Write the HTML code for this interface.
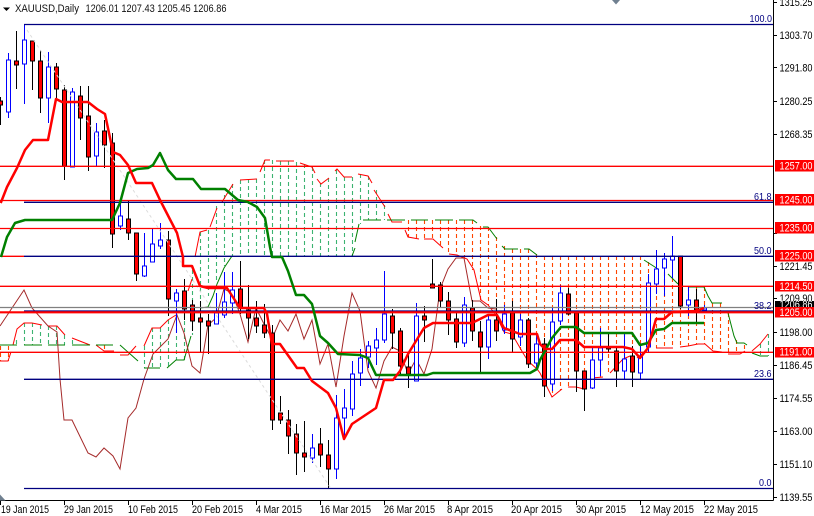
<!DOCTYPE html>
<html><head><meta charset="utf-8"><style>
html,body{margin:0;padding:0;background:#fff;width:814px;height:516px;overflow:hidden}
svg{display:block;font-family:"Liberation Sans",sans-serif}
</style></head><body>
<svg width="814" height="516" viewBox="0 0 814 516" xmlns="http://www.w3.org/2000/svg">
<rect width="814" height="516" fill="#fff"/>
<!-- cloud hatch -->
<g fill="none" stroke-width="1.1" stroke-dasharray="4 3">
<path stroke="#3cb371" d="M16.500 340V345M24.500 323V345M32.500 323V345M40.500 325V345M48.500 326V345M56.500 326V345M64.500 335V345M72.500 340V345M144.500 346V368M152.500 328V368M160.500 328V368M168.500 320V368M176.500 315V360M184.500 300V360M192.500 270V335M200.500 232V306M208.500 230V296M216.500 206V283M224.500 195V266M232.500 184V256M240.500 180V256M248.500 179V256M256.500 179V256M264.500 160V256M272.500 160V256M280.500 161V256M288.500 161V256M296.500 162V256M304.500 164V256M312.500 167V256M320.500 183V256M328.500 178V256M336.500 170V256M344.500 177V256M352.500 177V256M360.500 174V224M368.500 176V220M376.500 190V220M384.500 205V220M760.500 344V356M768.500 334V356"/>
<path stroke="#ff4500" d="M0.500 346V361M8.500 346V361M104.500 345V350M408.500 220V237M416.500 220V238M424.500 220V239M432.500 220V239M440.500 220V246M448.500 220V254M456.500 220V255M464.500 220V258M472.500 220V270M480.500 226V300M488.500 227V305M496.500 237V315M504.500 246V332M512.500 249V334M520.500 249V350M528.500 249V361M536.500 254V370M544.500 256V385M552.500 256V397M560.500 256V390M568.500 256V387M576.500 256V387M584.500 256V389M592.500 256V378M600.500 256V377M608.500 256V375M616.500 256V365M624.500 256V358M632.500 256V356M640.500 256V356M648.500 262V352M656.500 268V348M664.500 272V348M672.500 278V348M680.500 285V347M688.500 287V346M696.500 287V344M704.500 287V344M712.500 303V351M720.500 303V352M728.500 313V354M736.500 340V354M744.500 345V351"/>
</g>
<!-- span A -->
<path fill="none" stroke="#f00" stroke-width="1" d="M0 361H8L11 352M13 345L17 329L24 323H32L42 325M48 326H57L65 335M72 338L90 345M96 345L104 351H114M120 355H128L136 346M144 346L152 328H160L168 320L176 315M188 291L192 279M195 257L200 232L207 230M210 227L217 208M222 202L233 184M240 180L257 179M260 172L265 160H270M276 161H294M300 163L312 167L315 173M317 179L321 184L329 178M335 171L337 169L344 177H352M358 174L368 176L372 183M374 190L385 207M388 214L392 222H402M405 230L408 237L419 239M424 239H433L443 248M449 254L457 255L467 259L474 270L481 300L488 305L496 315L504 332L512 334L523 353L528 361L537 369L540 373L552 397L562 389M568 387H576L584 389M592 378L603 377M610 373L623 359L630 356M637 358L643 353M656 348H673M680 347L688 346L698 344H705L713 351L722 352M728 354H740L745 351M752 351L760 344L768 334"/>
<!-- span B -->
<path fill="none" stroke="#008000" stroke-width="1" d="M0 345H17M24 345H42M48 345H65M72 345H90M96 345H113M120 345L138 361M144 368H160M167 368L176 360H184L191 336M200 308L208 307L213 296L217 284L224 268L232 256M352 256L355 248M355 242L359 224M363 220H381M387 220H405M411 220H428M435 220H453M459 220H473L477 223M483 227H488L497 239M502 246L505 249H518M524 249H529L537 255M644 260L658 269M668 274L678 284M688 287H704L708 296L712 303H722M728 313L734 336L737 343H744L747 345M752 353L760 356H768"/>
<!-- chikou -->
<path fill="none" stroke="#a52a2a" stroke-width="1" d="M0 326L24 290L32 308L48 326L57 332L60 379L64 420H72L88 453L96 457L104 448L113 456L120 469L128 418L136 408L144 379L153 354L168 339L177 315L184 333L192 366L200 373L208 325L216 318L224 289L232 293L240 314L248 342L256 308L264 324L272 339L280 320L288 331L296 314L304 339L312 320L320 364L328 344L336 387L344 336L352 293L360 311L368 371L376 388L384 361L392 347L400 351L408 374L416 359L424 374L432 349L440 289L448 269L456 258H464L472 301H480L488 308L496 309"/>
<!-- candles -->
<path fill="none" stroke="#000" stroke-width="1" d="M.5 97V125M16.500 31V89M32.500 41V90M40.500 50V113M56.500 63V99M64.500 85V180M80.500 86V140M88.500 86V171M104.500 120V168M112.500 133V248M128.500 200V240M136.500 233V281M168.500 231V316M184.500 279V320M192.500 300V331M200.500 301V352M208.500 314V354M240.500 261V314M248.500 285V339M256.500 301V333M264.500 304V338M272.500 325V430M280.500 396V424M288.500 410V454M296.500 424V475M304.500 421V472M320.500 428V467M328.500 440V488M392.500 309V349M400.500 328V374M408.500 353V388M424.500 306V342M432.500 259V288M440.500 282V307M448.500 292V335M456.500 311V348M472.500 300V341M480.500 321V373M496.500 299V341M512.500 301V353M528.500 318V368M544.500 338V397M568.500 288V315M576.500 313V392M584.500 371V411M608.500 334V353M616.500 346V387M632.500 346V387M680.500 256V309M696.500 289V323"/>
<path fill="none" stroke="#0000ff" stroke-width="1" d="M8.500 53V118M24.500 25V104M48.500 52V123M72.500 88V167M96.500 123V167M120.500 200V230M144.500 233V277M152.500 229V262M160.500 223V249M176.500 289V333M216.500 293V324M224.500 272V318M232.500 272V314M312.500 434V463M336.500 395V479M344.500 389V436M352.500 361V416M360.500 349V386M368.500 341V368M376.500 328V365M384.500 271V343M416.500 303V381M464.500 297V347M488.500 314V359M504.500 305V334M520.500 314V346M536.500 333V369M552.500 308V391M560.500 285V325M592.500 348V389M600.500 328V376M624.500 334V379M640.500 344V380M648.500 274V353M656.500 250V294M664.500 253V296M672.500 236V278M688.500 287V316M704.500 305V312"/>
<path fill="#f00" stroke="#000" stroke-width="1" d="M-1.500 101h4v4h-4zM14.500 61h4v4h-4zM30.500 41h4v20h-4zM38.500 61h4v37h-4zM54.500 67h4v22h-4zM62.500 90h4v76h-4zM78.500 96h4v22h-4zM86.500 116h4v41h-4zM102.500 131h4v14h-4zM110.500 143h4v91h-4zM126.500 219h4v14h-4zM134.500 233h4v41h-4zM166.500 240h4v59h-4zM182.500 291h4v18h-4zM190.500 305h4v16h-4zM198.500 318h4v4h-4zM206.500 321h4v5h-4zM238.500 289h4v19h-4zM246.500 310h4v8h-4zM254.500 318h4v8h-4zM262.500 325h4v8h-4zM270.500 333h4v87h-4zM278.500 413h4v7h-4zM286.500 420h4v16h-4zM294.500 434h4v19h-4zM302.500 453h4v4h-4zM318.500 444h4v11h-4zM326.500 455h4v14h-4zM390.500 316h4v17h-4zM398.500 331h4v35h-4zM406.500 367h4v7h-4zM422.500 316h4v4h-4zM430.500 284h4v4h-4zM438.500 285h4v16h-4zM446.500 301h4v19h-4zM454.500 319h4v23h-4zM470.500 308h4v23h-4zM478.500 332h4v15h-4zM494.500 320h4v11h-4zM510.500 313h4v26h-4zM526.500 320h4v44h-4zM542.500 344h4v42h-4zM566.500 294h4v20h-4zM574.500 313h4v58h-4zM582.500 371h4v18h-4zM606.500 347h4v2h-4zM614.500 351h4v20h-4zM630.500 356h4v16h-4zM678.500 256h4v50h-4zM694.500 300h4v10h-4z"/>
<path fill="#fff" stroke="#0000ff" stroke-width="1" d="M6.500 60h4v52h-4zM22.500 40h4v24h-4zM46.500 67h4v31h-4zM70.500 92h4v75h-4zM94.500 132h4v24h-4zM118.500 216h4v10h-4zM142.500 266h4v10h-4zM150.500 244h4v18h-4zM158.500 240h4v6h-4zM174.500 293h4v8h-4zM214.500 313h4v11h-4zM222.500 302h4v13h-4zM230.500 290h4v13h-4zM310.500 448h4v10h-4zM334.500 418h4v51h-4zM342.500 408h4v10h-4zM350.500 374h4v35h-4zM358.500 358h4v15h-4zM366.500 346h4v11h-4zM374.500 340h4v8h-4zM382.500 314h4v26h-4zM414.500 316h4v65h-4zM462.500 305h4v38h-4zM486.500 320h4v27h-4zM502.500 314h4v16h-4zM518.500 320h4v17h-4zM534.500 344h4v19h-4zM550.500 322h4v62h-4zM558.500 293h4v28h-4zM590.500 360h4v28h-4zM598.500 348h4v12h-4zM622.500 359h4v12h-4zM638.500 357h4v16h-4zM646.500 283h4v64h-4zM654.500 269h4v15h-4zM662.500 259h4v9h-4zM670.500 256h4v4h-4zM686.500 300h4v5h-4zM702.500 308h4v2h-4z"/>
<!-- diagonal fib trend -->
<path fill="none" stroke="#dcdcdc" stroke-width="1" stroke-dasharray="3 3" d="M27 30L330 487"/>
<!-- horizontal lines -->
<g fill="none" stroke-width="1.300">
<path stroke="#808080" d="M0 307.500H773"/>
<path stroke="#f00" d="M0 166.300H773M0 200.500H773M0 228.500H773M0 256.300H24M0 286.300H773M0 352.300H773"/>
<path stroke="#000080" d="M24 24.500H773M24 202.300H773M24 256.300H773M24 311H773M24 379.300H773M24 488.500H773"/>
<path stroke="#f00" stroke-width="2.200" d="M0 312.300H773"/>
</g>
<!-- tenkan / kijun -->
<path fill="none" stroke="#008000" stroke-width="2.500" stroke-linejoin="round" d="M1 257L7 237L15 223L25 220H112L120 203L128 173L137 169L148 168L153 165L160 153L168 170L176 179H193L201 189H225L238 200L248 202L257 207L265 218L270 247L272 257H282L288 271L296 295H304L312 304L320 336L328 343L338 354L360 355L368 358L376 375H427L433 373H530L537 369L540 360L552 338L561 327H576L584 333H632L640 345L648 343L656 330L664 329L672 323H704"/>
<path fill="none" stroke="#f00" stroke-width="2.500" stroke-linejoin="round" d="M.7 203L7 187L17 168L25 150L33 140H48L56 99L62 102H88L97 109L105 114L113 152L120 155L128 165L136 183H152L160 200L177 233L183 257V266H192L200 286L208 288H227L240 308H264L267 314L272 344H280L297 368H304L312 381L328 393L336 408L344 439L352 424L376 408L384 380H393L400 371L408 354L424 328L433 323H472L488 315H497L504 328L520 334H537L540 344L545 349H552L560 340H576L584 347H623L632 349L640 358L648 348L656 319H664L672 312L696 311L704 308"/>
<!-- axes -->
<path fill="none" stroke="#000" stroke-width="1" d="M773.500 0V500.500M0 500.500H773.500M773 2.500H777M773 35.500H777M773 67.500H777M773 101.500H777M773 134.500H777M773 233.500H777M773 266.500H777M773 298.500H777M773 332.500H777M773 365.500H777M773 398.500H777M773 431.500H777M773 464.500H777M773 497.500H777M.5 500V505M64.500 500V505M128.500 500V505M192.500 500V505M256.500 500V505M320.500 500V505M384.500 500V505M448.500 500V505M512.500 500V505M576.500 500V505M640.500 500V505M704.500 500V505"/>
<!-- small triangles -->
<path fill="#708090" d="M612 0H620L616 4.500Z"/>
<path fill="#708090" d="M0 494.500L5.500 500.500H0Z"/>
<path fill="#000" d="M3 7.500H10L6.500 11Z"/>
<!-- header -->
<g font-size="11" fill="#111">
<text x="15" y="12" textLength="64" lengthAdjust="spacingAndGlyphs">XAUUSD,Daily</text>
<text x="85.500" y="12" textLength="141" lengthAdjust="spacingAndGlyphs">1206.01 1207.43 1205.45 1206.86</text>
</g>
<!-- fib labels -->
<g font-size="10.500" fill="#000080">
<text x="749.500" y="22" textLength="22.500" lengthAdjust="spacingAndGlyphs">100.0</text>
<text x="754" y="200" textLength="17.500" lengthAdjust="spacingAndGlyphs">61.8</text>
<text x="754" y="254" textLength="17.500" lengthAdjust="spacingAndGlyphs">50.0</text>
<text x="754" y="309" textLength="17.500" lengthAdjust="spacingAndGlyphs">38.2</text>
<text x="754" y="377" textLength="17.500" lengthAdjust="spacingAndGlyphs">23.6</text>
<text x="759" y="486" textLength="12.500" lengthAdjust="spacingAndGlyphs">0.0</text>
</g>
<!-- price axis -->
<g font-size="11" fill="#000">
<text x="779.500" y="6" textLength="33" lengthAdjust="spacingAndGlyphs">1315.25</text>
<text x="779.500" y="39" textLength="33" lengthAdjust="spacingAndGlyphs">1303.70</text>
<text x="779.500" y="71.500" textLength="33" lengthAdjust="spacingAndGlyphs">1291.80</text>
<text x="779.500" y="105" textLength="33" lengthAdjust="spacingAndGlyphs">1280.25</text>
<text x="779.500" y="138" textLength="33" lengthAdjust="spacingAndGlyphs">1268.35</text>
<text x="779.500" y="270" textLength="33" lengthAdjust="spacingAndGlyphs">1221.45</text>
<text x="779.500" y="302" textLength="33" lengthAdjust="spacingAndGlyphs">1209.90</text>
<text x="779.500" y="336" textLength="33" lengthAdjust="spacingAndGlyphs">1198.00</text>
<text x="779.500" y="369" textLength="33" lengthAdjust="spacingAndGlyphs">1186.45</text>
<text x="779.500" y="402" textLength="33" lengthAdjust="spacingAndGlyphs">1174.55</text>
<text x="779.500" y="435" textLength="33" lengthAdjust="spacingAndGlyphs">1163.00</text>
<text x="779.500" y="468" textLength="33" lengthAdjust="spacingAndGlyphs">1151.10</text>
<text x="779.500" y="501" textLength="33" lengthAdjust="spacingAndGlyphs">1139.55</text>
</g>
<!-- price tags -->
<rect x="775" y="301" width="39" height="9" fill="#000"/>
<text x="779.500" y="308" font-size="11" fill="#fff" textLength="33" lengthAdjust="spacingAndGlyphs">1206.86</text>
<g fill="#f00">
<rect x="775" y="160" width="39" height="11.500"/>
<rect x="775" y="194" width="39" height="11.500"/>
<rect x="775" y="222" width="39" height="11.500"/>
<rect x="775" y="250" width="39" height="11.500"/>
<rect x="775" y="281" width="39" height="10.500"/>
<rect x="775" y="307" width="39" height="10.500"/>
<rect x="775" y="347" width="39" height="10.500"/>
</g>
<g font-size="11" fill="#fff">
<text x="779.500" y="169.500" textLength="33" lengthAdjust="spacingAndGlyphs">1257.00</text>
<text x="779.500" y="203.500" textLength="33" lengthAdjust="spacingAndGlyphs">1245.00</text>
<text x="779.500" y="231.500" textLength="33" lengthAdjust="spacingAndGlyphs">1235.00</text>
<text x="779.500" y="259.500" textLength="33" lengthAdjust="spacingAndGlyphs">1225.00</text>
<text x="779.500" y="290" textLength="33" lengthAdjust="spacingAndGlyphs">1214.50</text>
<text x="779.500" y="316" textLength="33" lengthAdjust="spacingAndGlyphs">1205.00</text>
<text x="779.500" y="355.500" textLength="33" lengthAdjust="spacingAndGlyphs">1191.00</text>
</g>
<!-- time axis -->
<g font-size="11" fill="#000">
<text x="1" y="513" textLength="48" lengthAdjust="spacingAndGlyphs">19 Jan 2015</text>
<text x="64" y="513" textLength="49" lengthAdjust="spacingAndGlyphs">29 Jan 2015</text>
<text x="128" y="513" textLength="50" lengthAdjust="spacingAndGlyphs">10 Feb 2015</text>
<text x="192" y="513" textLength="51" lengthAdjust="spacingAndGlyphs">20 Feb 2015</text>
<text x="256" y="513" textLength="46" lengthAdjust="spacingAndGlyphs">4 Mar 2015</text>
<text x="320" y="513" textLength="51" lengthAdjust="spacingAndGlyphs">16 Mar 2015</text>
<text x="384" y="513" textLength="51" lengthAdjust="spacingAndGlyphs">26 Mar 2015</text>
<text x="447" y="513" textLength="46" lengthAdjust="spacingAndGlyphs">8 Apr 2015</text>
<text x="511" y="513" textLength="51" lengthAdjust="spacingAndGlyphs">20 Apr 2015</text>
<text x="576" y="513" textLength="50" lengthAdjust="spacingAndGlyphs">30 Apr 2015</text>
<text x="640" y="513" textLength="54" lengthAdjust="spacingAndGlyphs">12 May 2015</text>
<text x="704" y="513" textLength="54" lengthAdjust="spacingAndGlyphs">22 May 2015</text>
</g>
</svg>
</body></html>
